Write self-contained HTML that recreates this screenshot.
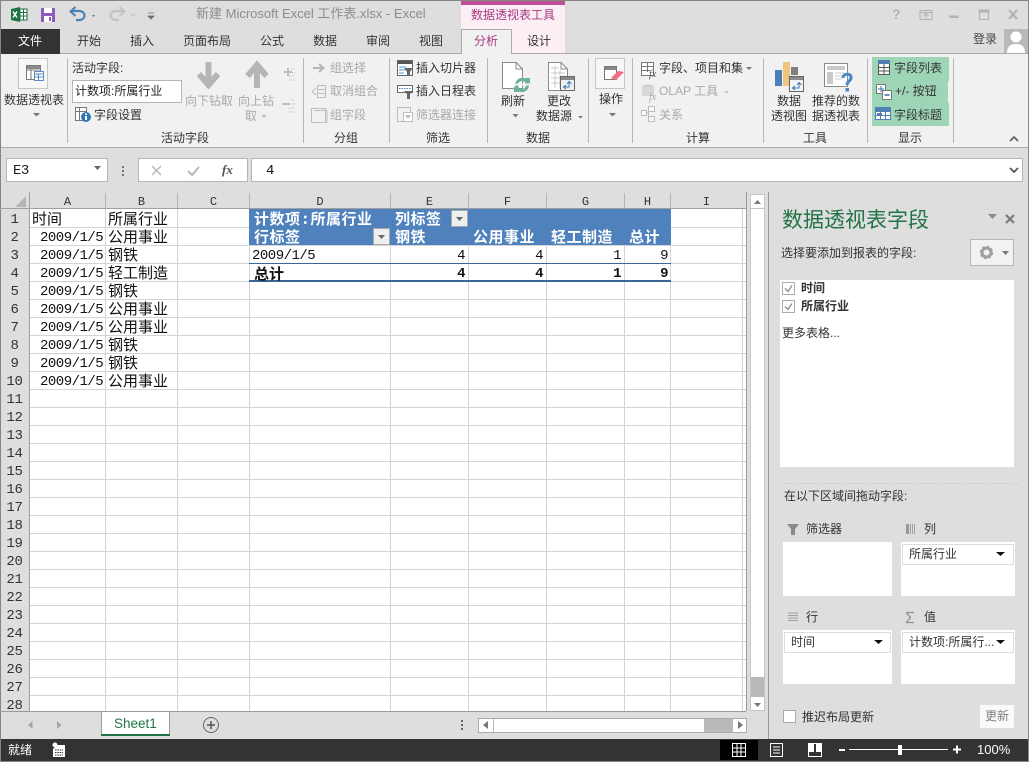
<!DOCTYPE html>
<html lang="zh"><head><meta charset="utf-8"><title>Excel</title>
<style>
html,body{margin:0;padding:0;width:1029px;height:762px;overflow:hidden;background:#dedede}
*{box-sizing:border-box}
#w{position:relative;width:1029px;height:762px;overflow:hidden;font-family:"Liberation Sans","Noto Sans CJK SC",sans-serif;font-size:12px;color:#333}
.t{position:absolute;white-space:nowrap;line-height:16px;height:16px}
.g{color:#a9a9a9}
.b{position:absolute}
.c{position:absolute;white-space:nowrap;line-height:18px;height:18px;margin-top:1px;font-family:"Liberation Mono","WenQuanYi Zen Hei","Noto Sans CJK SC",monospace;font-size:14px;letter-spacing:-.5px;color:#111}
.z{font-family:"WenQuanYi Zen Hei","Noto Sans CJK SC",sans-serif;font-size:15px;letter-spacing:0}
.w{color:#fff;font-weight:bold;letter-spacing:.5px}
.bb{font-weight:bold}
.r{text-align:right}
.n{position:absolute;left:0;width:29px;text-align:center;line-height:18px;height:18px;margin-top:1px;font-family:"Liberation Mono",monospace;font-size:14px;letter-spacing:-.3px;color:#333}
.h{position:absolute;top:194px;text-align:center;line-height:16px;font-family:"Liberation Mono",monospace;font-size:12px;color:#333}
svg{position:absolute;left:0;top:0}
</style></head><body><div id="w">

<svg width="1029" height="762" viewBox="0 0 1029 762">
<!-- window background and borders -->
<rect width="1029" height="762" fill="#dedede"/>
<rect y="54" width="1029" height="94" fill="#f1f1f1"/>
<rect y="53" width="1029" height="1" fill="#ababab"/>
<rect y="147" width="1029" height="1" fill="#ababab"/>
<rect width="1029" height="1" fill="#858585"/>
<rect width="1" height="762" fill="#858585"/>
<rect x="1028" width="1" height="762" fill="#858585"/>
<!-- contextual tabs -->
<rect x="461" y="1" width="104" height="52" fill="#fbeef5"/>
<rect x="461" y="1" width="104" height="4" fill="#bd5196"/>
<rect x="1" y="29" width="59" height="25" fill="#333"/>
<path d="M461.5 54V29.500H511.500V54" fill="#f1f1f1" stroke="#ababab"/>
<rect x="462" y="53" width="49" height="2" fill="#f1f1f1"/>
<!-- ribbon separators -->
<g fill="#b5b5b5"><rect x="67" y="58" width="1" height="85"/><rect x="303" y="58" width="1" height="85"/><rect x="389" y="58" width="1" height="85"/><rect x="487" y="58" width="1" height="85"/><rect x="588" y="58" width="1" height="85"/><rect x="632" y="58" width="1" height="85"/><rect x="763" y="58" width="1" height="85"/><rect x="867" y="58" width="1" height="85"/><rect x="953" y="58" width="1" height="85"/></g>
<!-- show group highlight -->
<path d="M872 57H949V81H948V103H949V126H872Z" fill="#9fd5b7"/>

<!-- Quick access: excel -->
<path d="M11 9 20 7V22L11 20Z" fill="#1e7145"/><rect x="20" y="9" width="7" height="11" fill="#fff" stroke="#1e7145"/><path d="M13 11.500 17 17.500M17 11.500 13 17.500" stroke="#fff" stroke-width="1.500"/><path d="M23.500 9V20M20 12.500H27M20 16H27" stroke="#1e7145"/>
<!-- save -->
<rect x="41" y="8" width="14" height="14" fill="#8e5db5"/><rect x="44" y="8" width="8" height="5" fill="#fff"/><rect x="44" y="16" width="8" height="6" fill="#fff"/><rect x="49" y="17" width="2" height="4" fill="#8e5db5"/>
<!-- undo / redo -->
<path d="M72 11H80C86 12 86 19 80 20H76" fill="none" stroke="#4a80b8" stroke-width="2.200"/><path d="M75.500 7 70.500 11.500 75.500 16" fill="none" stroke="#4a80b8" stroke-width="2"/>
<path d="M92 15 95 15 93.500 17Z" fill="#707070"/>
<path d="M123 11H115C109 12 109 19 115 20H119" fill="none" stroke="#c2c2c2" stroke-width="2.200"/><path d="M119.500 7 124.500 11.500 119.500 16" fill="none" stroke="#c2c2c2" stroke-width="2"/>
<path d="M130 14H136L133 17Z" fill="#c9c9c9"/>
<path d="M148 13H154M148 16H154L151 19Z" fill="#707070" stroke="#707070" stroke-width=".8"/>

<!-- window controls -->
<g fill="none" stroke="#b3b3b3">
<rect x="920" y="10.500" width="12" height="9"/><path d="M920 12.500H932M926 19V14M923.500 16 926 13.500 928.500 16"/>
<rect x="950" y="16" width="8" height="1.500" fill="#b3b3b3"/>
<rect x="979.500" y="10.500" width="9" height="9"/><rect x="979" y="10" width="10" height="2" fill="#b3b3b3"/>
<path d="M1009 10 1017 19M1017 10 1009 19" stroke-width="2.200"/></g>
<!-- avatar -->
<rect x="1004" y="29" width="24" height="24" fill="#b9b9b9"/>
<circle cx="1016" cy="37" r="5.500" fill="#fff"/><path d="M1007 53C1007 46 1011 44 1016 44S1025 46 1025 53Z" fill="#fff"/>
<path d="M1010 141 1014 137 1018 141" fill="none" stroke="#666" stroke-width="1.800"/>

<!-- pivot table button -->
<rect x="18.500" y="58.500" width="29" height="30" fill="#f7f7f7" stroke="#c6c6c6"/>
<g fill="none" stroke="#7b7b7b"><rect x="26.500" y="65.500" width="14" height="14" fill="#fff"/><path d="M26.500 70H40.500M31 65.500V79.500"/></g>
<rect x="27" y="66" width="13" height="3" fill="#8a8a8a"/>
<rect x="34.500" y="71.500" width="9" height="9" fill="#fff" stroke="#5b8cc0"/><path d="M34.500 74H43.500M34.500 77H43.500M38.500 74V80.500" stroke="#5b8cc0" fill="none"/>
<path d="M33 113H40L36.500 116.500Z" fill="#777"/>
<!-- field settings icon -->
<g fill="none" stroke="#777"><rect x="75.500" y="107.500" width="11" height="13" fill="#fff"/><path d="M75.500 111.500H86.500M79.500 107.500V120.500"/></g>
<circle cx="86" cy="117" r="5" fill="#2e75b5"/><rect x="85" y="116" width="2" height="4" fill="#fff"/><rect x="85" y="113.500" width="2" height="1.500" fill="#fff"/>
<!-- drill down / up -->
<path d="M208.500 62V82M199 74 208.500 85 218 74" fill="none" stroke="#b5b5b5" stroke-width="6"/>
<path d="M257 88V68M247.500 76 257 65 266.500 76" fill="none" stroke="#b5b5b5" stroke-width="6"/>
<path d="M261 115H267L264 118Z" fill="#bdbdbd"/>
<g stroke="#bdbdbd" fill="none"><path d="M284 72H292M288 68V76" stroke-width="2"/><path d="M291 69H295M292 72.500H295M289 76H295M289 80H295" stroke-dasharray="1 1"/>
<path d="M282 104H290" stroke-width="2"/><path d="M291 100H295M292 104H295M289 108H295M289 112H295" stroke-dasharray="1 1"/></g>
<!-- group icons -->
<path d="M313 68H323M319 64 323.500 68 319 72" fill="none" stroke="#b5b5b5" stroke-width="2"/>
<g fill="none" stroke="#bdbdbd"><rect x="317.500" y="85.500" width="8" height="12"/><path d="M317.500 89.500H325.500M317.500 93.500H325.500M316 88 312 91.500 316 95"/></g>
<rect x="311.500" y="108.500" width="14" height="14" fill="none" stroke="#bdbdbd"/><path d="M314 110.500H327V123" fill="none" stroke="#bdbdbd"/>
<!-- slicer icons -->
<rect x="397.500" y="60.500" width="15" height="15" fill="#fff" stroke="#666"/><rect x="398" y="61" width="14" height="3" fill="#555"/><path d="M399 67H406M399 70H405M399 73H404" stroke="#4f9bd9"/><path d="M404 68H413L410 72V76H407V72Z" fill="#666"/>
<rect x="397.500" y="85.500" width="15" height="7" fill="#fff" stroke="#666"/><path d="M399 88.500H411" stroke="#4f81bd" stroke-dasharray="1.500 1"/><path d="M404 91H413L410 94V99H407V94Z" fill="#666"/>
<rect x="397.500" y="107.500" width="13" height="14" fill="#f1f1f1" stroke="#bdbdbd"/><rect x="403.500" y="112.500" width="9" height="9" fill="#fff" stroke="#bdbdbd"/><path d="M405 115H411L408 119Z" fill="#bdbdbd"/>
<!-- refresh -->
<path d="M502.500 62.500H516L522.500 69V88.500H502.500Z" fill="#fff" stroke="#8a8a8a"/><path d="M516 62.500V69H522.500" fill="none" stroke="#8a8a8a"/>
<circle cx="522" cy="85" r="5.500" fill="none" stroke="#6bb39a" stroke-width="3"/><rect x="514" y="83.500" width="16" height="2" fill="#f1f1f1"/><path d="M524 78 530 78 530 84Z M520 92 514 92 514 86Z" fill="#6bb39a"/>
<!-- change source -->
<path d="M548.500 62.500H561L567.500 69V90.500H548.500Z" fill="#fff" stroke="#8a8a8a"/><path d="M561 62.500V69H567.500" fill="none" stroke="#8a8a8a"/><path d="M551 68H559M551 73H565M551 78H565M551 83H565M555 66V88M560 70V88" stroke="#c8c8c8" fill="none"/>
<rect x="560.500" y="76.500" width="14" height="14" fill="#eee" stroke="#666"/><rect x="561" y="77" width="13" height="3" fill="#888"/><path d="M564 87H569V82M567 84 569 81.500 571.500 84M566 85 563.500 87 566 89" fill="none" stroke="#3b78b8"/>
<path d="M578 116H583L580.500 118.500Z" fill="#777"/>
<path d="M512.500 114H518.500L515.500 117.500Z" fill="#777"/>
<!-- actions -->
<rect x="595.500" y="58.500" width="29" height="30" fill="#f7f7f7" stroke="#c6c6c6"/>
<rect x="604.500" y="66.500" width="12" height="13" fill="#fff" stroke="#777"/><rect x="605" y="67" width="11" height="3" fill="#888"/><path d="M611 78 618 71 624 72 616 80Z" fill="#ef6f86"/>
<path d="M609 113H616L612.500 116.500Z" fill="#777"/>
<!-- calc -->
<g fill="none" stroke="#777"><rect x="641.500" y="62.500" width="12" height="13" fill="#fff"/><path d="M641.500 66.500H653.500M641.500 70.500H650M647.500 62.500V72"/></g>
<text x="649" y="77" font-family="Liberation Serif" font-style="italic" font-size="10" fill="#555">fx</text>
<path d="M746 67H752L749 70Z" fill="#777"/>
<ellipse cx="648" cy="87" rx="6" ry="2.500" fill="#cfcfcf"/><rect x="642" y="87" width="12" height="9" fill="#d8d8d8"/>
<text x="649" y="100" font-family="Liberation Serif" font-style="italic" font-size="10" fill="#aaa">fx</text>
<path d="M724 91H729L726.500 93.500Z" fill="#c4c4c4"/>
<g fill="#f7f7f7" stroke="#bdbdbd"><rect x="641.500" y="110.500" width="5" height="5"/><rect x="648.500" y="106.500" width="6" height="5"/><rect x="648.500" y="116.500" width="6" height="5"/></g><path d="M646.500 113H648.500M648.500 109V119" stroke="#bdbdbd" fill="none"/>
<!-- pivot chart -->
<rect x="775" y="70" width="7" height="16" fill="#4a7fb8"/><rect x="783" y="62" width="7" height="24" fill="#eec57a"/><rect x="791" y="67" width="7" height="8" fill="#7f7f7f"/>
<rect x="789.500" y="76.500" width="14" height="15" fill="#f4f4f4" stroke="#666"/><rect x="790" y="77" width="13" height="3" fill="#8a8a8a"/><path d="M793 88H799V83M797 85 799 82.500 801.500 85M795 86 792.500 88 795 90" fill="none" stroke="#3b78b8"/>
<!-- recommended -->
<rect x="824.500" y="63.500" width="23" height="23" fill="#fff" stroke="#8a8a8a"/><rect x="827" y="66" width="18" height="4" fill="#c9c9c9"/><rect x="827" y="72" width="6" height="12" fill="#c9c9c9"/><path d="M835 73H845M835 76H845M835 79H842" stroke="#c9c9c9"/>
<path d="M843 78C843 73 852 73 851 78C851 81 847 81 847 85" fill="none" stroke="#4a86c5" stroke-width="3"/><rect x="845.500" y="88" width="3.500" height="3.500" fill="#4a86c5"/>
<!-- show icons -->
<rect x="878.500" y="60.500" width="11" height="14" fill="#fff" stroke="#555"/><rect x="878" y="60" width="12" height="4" fill="#4f7fb5"/><path d="M878.500 67.500H889.500M878.500 71H889.500M884 64V75" stroke="#555" fill="none"/>
<rect x="876.500" y="84.500" width="9" height="9" fill="#fff" stroke="#777"/><path d="M878 89H884M881 86V92" stroke="#2f6fae"/><rect x="882.500" y="90.500" width="9" height="9" fill="#fff" stroke="#777"/><path d="M884.500 95H889.500" stroke="#2f6fae" stroke-width="1.500"/>
<rect x="875.500" y="108.500" width="15" height="11" fill="#fff" stroke="#4f7fb5"/><rect x="875" y="107" width="16" height="5" fill="#4f7fb5"/><path d="M875.500 115.500H890.500M880.500 112V119M885.500 112V119" stroke="#4f7fb5"/><rect x="877" y="113" width="5" height="2" fill="#4f7fb5"/>

<!-- formula bar -->
<rect x="6.500" y="158.500" width="101" height="23" fill="#fff" stroke="#b5b5b5"/>
<path d="M94 166H101L97.500 170Z" fill="#666"/>
<rect x="122" y="166" width="2" height="2" fill="#777"/><rect x="122" y="170" width="2" height="2" fill="#777"/><rect x="122" y="174" width="2" height="2" fill="#777"/>
<rect x="138.500" y="158.500" width="109" height="23" fill="#fff" stroke="#b5b5b5"/>
<rect x="251.500" y="158.500" width="771" height="23" fill="#fff" stroke="#b5b5b5"/>
<path d="M152 166 161 175M161 166 152 175" stroke="#b8b8b8" stroke-width="1.500"/>
<path d="M188 171 192 175 199 167" fill="none" stroke="#b8b8b8" stroke-width="2"/>
<path d="M1010 168 1014 172 1018 168" fill="none" stroke="#555" stroke-width="1.800"/>

<!-- sheet -->
<rect x="29" y="209" width="717" height="502" fill="#fff"/>
<g fill="#d4d4d4">
<rect x="105" y="209" width="1" height="502"/><rect x="177" y="209" width="1" height="502"/><rect x="249" y="209" width="1" height="502"/><rect x="390" y="209" width="1" height="502"/><rect x="468" y="209" width="1" height="502"/><rect x="546" y="209" width="1" height="502"/><rect x="624" y="209" width="1" height="502"/><rect x="670" y="209" width="1" height="502"/><rect x="742" y="209" width="1" height="502"/>
<rect x="29" y="227" width="717" height="1"/><rect x="29" y="245" width="717" height="1"/><rect x="29" y="263" width="717" height="1"/><rect x="29" y="281" width="717" height="1"/><rect x="29" y="299" width="717" height="1"/><rect x="29" y="317" width="717" height="1"/><rect x="29" y="335" width="717" height="1"/><rect x="29" y="353" width="717" height="1"/><rect x="29" y="371" width="717" height="1"/><rect x="29" y="389" width="717" height="1"/><rect x="29" y="407" width="717" height="1"/><rect x="29" y="425" width="717" height="1"/><rect x="29" y="443" width="717" height="1"/><rect x="29" y="461" width="717" height="1"/><rect x="29" y="479" width="717" height="1"/><rect x="29" y="497" width="717" height="1"/><rect x="29" y="515" width="717" height="1"/><rect x="29" y="533" width="717" height="1"/><rect x="29" y="551" width="717" height="1"/><rect x="29" y="569" width="717" height="1"/><rect x="29" y="587" width="717" height="1"/><rect x="29" y="605" width="717" height="1"/><rect x="29" y="623" width="717" height="1"/><rect x="29" y="641" width="717" height="1"/><rect x="29" y="659" width="717" height="1"/><rect x="29" y="677" width="717" height="1"/><rect x="29" y="695" width="717" height="1"/>
</g>
<!-- header edges -->
<rect x="29" y="192" width="1" height="519" fill="#a0a0a0"/>
<rect y="208" width="747" height="1" fill="#a0a0a0"/>
<rect x="746" y="192" width="1" height="519" fill="#9a9a9a"/>
<g fill="#b4b4b4"><rect x="105" y="193" width="1" height="15"/><rect x="177" y="193" width="1" height="15"/><rect x="249" y="193" width="1" height="15"/><rect x="390" y="193" width="1" height="15"/><rect x="468" y="193" width="1" height="15"/><rect x="546" y="193" width="1" height="15"/><rect x="624" y="193" width="1" height="15"/><rect x="670" y="193" width="1" height="15"/></g>
<path d="M26 196V207H15Z" fill="#b5b5b5"/>
<!-- pivot -->
<rect x="249" y="209" width="422" height="36" fill="#4f81bd"/>
<rect x="249" y="263" width="422" height="1" fill="#3a6797"/>
<rect x="249" y="280" width="422" height="2" fill="#3a6797"/>
<rect x="451.500" y="210.500" width="16" height="16" fill="#efefef" stroke="#a9a9a9"/><path d="M456 217H463L459.500 221Z" fill="#666"/>
<rect x="373.500" y="228.500" width="16" height="16" fill="#efefef" stroke="#a9a9a9"/><path d="M378 235H385L381.500 239Z" fill="#666"/>

<!-- sheet tabs bar -->
<rect x="1" y="711" width="764" height="28" fill="#dedede"/>
<rect y="711" width="746" height="1" fill="#9a9a9a"/>
<path d="M101.500 735V711.500H169.500V735" fill="#fff" stroke="#9a9a9a"/>
<rect x="101" y="734" width="69" height="2" fill="#217346"/>
<path d="M32.500 721V729L28 725Z" fill="#a6a6a6"/><path d="M57 721V729L61.500 725Z" fill="#a6a6a6"/>
<circle cx="211" cy="725" r="7.500" fill="none" stroke="#666"/><path d="M207 725H215M211 721V729" stroke="#555" stroke-width="1.500"/>
<rect x="461" y="720" width="2" height="2" fill="#666"/><rect x="461" y="724" width="2" height="2" fill="#666"/><rect x="461" y="728" width="2" height="2" fill="#666"/>
<!-- horizontal scrollbar -->
<rect x="478.500" y="718.500" width="268" height="14" fill="#b9b9b9" stroke="#ababab"/>
<rect x="479" y="719" width="14" height="13" fill="#fff"/><rect x="494" y="719" width="210" height="13" fill="#fff"/><rect x="733" y="719" width="13" height="13" fill="#fff"/>
<path d="M488 721V729L483 725Z" fill="#777"/><path d="M738 721V729L743 725Z" fill="#777"/>
<!-- vertical scrollbar -->
<rect x="750.500" y="194.500" width="14" height="516" fill="#fff" stroke="#c5c5c5"/>
<rect x="751" y="208" width="13" height="1" fill="#c5c5c5"/>
<rect x="751" y="677" width="13" height="20" fill="#b9b9b9"/>
<path d="M754 204H761L757.500 200Z" fill="#777"/><path d="M754 703H761L757.500 707Z" fill="#777"/>

<!-- right pane -->
<rect x="768" y="192" width="1" height="547" fill="#9a9a9a"/>
<rect x="769" y="192" width="259" height="547" fill="#dedede"/>
<path d="M988 214H997L992.500 219Z" fill="#8a8a8a"/>
<path d="M1006 215 1014 223M1014 215 1006 223" stroke="#7a7a7a" stroke-width="2.200"/>
<rect x="970.500" y="239.500" width="43" height="26" fill="#f2f2f2" stroke="#b5b5b5"/>
<circle cx="986.500" cy="252.500" r="4.500" fill="none" stroke="#a0a0a0" stroke-width="3"/><circle cx="986.500" cy="252.500" r="6" fill="none" stroke="#a0a0a0" stroke-width="1.500" stroke-dasharray="2.500 2.200"/>
<path d="M1002 251H1009L1005.500 255Z" fill="#777"/>
<rect x="780" y="280" width="234" height="187" fill="#fff"/>
<rect x="782.500" y="282.500" width="12" height="12" fill="#fff" stroke="#ababab"/><path d="M785 288.500 788 291.500 792 285.500" fill="none" stroke="#8a8a8a" stroke-width="1.300"/>
<rect x="782.500" y="300.500" width="12" height="12" fill="#fff" stroke="#ababab"/><path d="M785 306.500 788 309.500 792 303.500" fill="none" stroke="#8a8a8a" stroke-width="1.300"/>
<path d="M782 483.500H1017" stroke="#bdbdbd" stroke-dasharray="1 2"/>
<path d="M787 524H799L795 529V535H791V529Z" fill="#8a8a8a"/>
<path d="M906.500 524V534M908.500 524V534M910.500 524V534M912.500 524V534M914.500 524V534" stroke="#a0a0a0"/><rect x="906" y="524" width="3" height="10" fill="#999"/>
<path d="M788 613H798M788 615.500H798M788 618H798M788 620.500H798" stroke="#a0a0a0"/>
<path d="M906 612.500H914M906 622.500H914M906.500 613 910.500 617.500 906.500 622" fill="none" stroke="#909090" stroke-width="1.300"/>
<rect x="783" y="542" width="109" height="54" fill="#fff"/>
<rect x="901" y="542" width="114" height="54" fill="#fff"/>
<rect x="783" y="630" width="109" height="54" fill="#fff"/>
<rect x="901" y="630" width="114" height="54" fill="#fff"/>
<rect x="902.500" y="544.500" width="111" height="20" fill="#fff" stroke="#dcdcdc"/>
<rect x="784.500" y="632.500" width="106" height="20" fill="#fff" stroke="#dcdcdc"/>
<rect x="902.500" y="632.500" width="111" height="20" fill="#fff" stroke="#dcdcdc"/>
<path d="M996 552H1005L1000.500 556Z" fill="#111"/><path d="M874 640H883L878.500 644Z" fill="#111"/><path d="M996 640H1005L1000.500 644Z" fill="#111"/>
<rect x="783.500" y="710.500" width="12" height="12" fill="#fff" stroke="#ababab"/>
<rect x="980" y="705" width="34" height="23" fill="#fafafa"/>

<!-- status bar -->
<rect x="1" y="739" width="1027" height="22" fill="#333"/>
<rect y="761" width="1029" height="1" fill="#858585"/>
<circle cx="55" cy="745" r="2.500" fill="#fff"/><path d="M58 745H65V757H53V749" fill="#fff"/><path d="M55 750H63M55 752.500H63M55 755H63" stroke="#333" stroke-dasharray="1.500 .8"/>
<rect x="720" y="740" width="38" height="20" fill="#000"/>
<path d="M732.500 743.500H745.500V756.500H732.500ZM732.500 748H745.500M732.500 752H745.500M737 743.500V756.500M741 743.500V756.500" fill="none" stroke="#fff"/>
<rect x="770.500" y="743.500" width="12" height="13" fill="none" stroke="#fff"/><path d="M773 747H780M773 750H780M773 753H780" stroke="#fff"/>
<path d="M808.500 743.500H821.500V756.500H808.500Z" fill="none" stroke="#fff"/><rect x="809" y="744" width="5" height="8" fill="#fff"/><rect x="816" y="744" width="5" height="8" fill="#fff"/>
<rect x="839" y="749" width="6" height="2" fill="#fff"/>
<rect x="849" y="749" width="99" height="1" fill="#fff"/><rect x="898" y="745" width="4" height="10" fill="#fff"/>
<path d="M953 749.500H961M957 745.500V753.500" stroke="#fff" stroke-width="2"/>
</svg>

<!-- title -->
<div class="t" style="left:196px;top:6px;font-size:13px;color:#8c8c8c">新建 Microsoft Excel 工作表.xlsx - Excel</div>
<div class="t" style="left:471px;top:7px;color:#a8387f">数据透视表工具</div>
<div class="t" style="left:892px;top:6px;font-size:14px;font-weight:bold;color:#b3b3b3">?</div>
<div class="t" style="left:973px;top:31px;color:#444">登录</div>

<!-- tabs -->
<div class="t" style="left:18px;top:33px;color:#fff">文件</div>
<div class="t" style="left:77px;top:33px">开始</div>
<div class="t" style="left:130px;top:33px">插入</div>
<div class="t" style="left:183px;top:33px">页面布局</div>
<div class="t" style="left:260px;top:33px">公式</div>
<div class="t" style="left:313px;top:33px">数据</div>
<div class="t" style="left:366px;top:33px">审阅</div>
<div class="t" style="left:419px;top:33px">视图</div>
<div class="t" style="left:474px;top:33px;color:#a8387f">分析</div>
<div class="t" style="left:527px;top:33px">设计</div>

<!-- ribbon text -->
<div class="t" style="left:4px;top:92px">数据透视表</div>
<div class="t" style="left:72px;top:60px">活动字段:</div>
<div class="b" style="left:72px;top:80px;width:110px;height:23px;background:#fff;border:1px solid #b5b5b5;line-height:21px;padding-left:2px;white-space:nowrap;color:#222">计数项:所属行业</div>
<div class="t" style="left:94px;top:107px">字段设置</div>
<div class="t g" style="left:185px;top:93px">向下钻取</div>
<div class="t g" style="left:238px;top:93px">向上钻</div>
<div class="t g" style="left:245px;top:108px">取</div>
<div class="t g" style="left:330px;top:60px">组选择</div>
<div class="t g" style="left:330px;top:83px">取消组合</div>
<div class="t g" style="left:330px;top:107px">组字段</div>
<div class="t" style="left:416px;top:60px">插入切片器</div>
<div class="t" style="left:416px;top:83px">插入日程表</div>
<div class="t g" style="left:416px;top:107px">筛选器连接</div>
<div class="t" style="left:501px;top:93px">刷新</div>
<div class="t" style="left:547px;top:93px">更改</div>
<div class="t" style="left:536px;top:108px">数据源</div>
<div class="t" style="left:599px;top:91px">操作</div>
<div class="t" style="left:659px;top:60px">字段、项目和集</div>
<div class="t g" style="left:659px;top:83px">OLAP 工具</div>
<div class="t g" style="left:659px;top:107px">关系</div>
<div class="t" style="left:777px;top:93px">数据</div>
<div class="t" style="left:771px;top:108px">透视图</div>
<div class="t" style="left:812px;top:93px">推荐的数</div>
<div class="t" style="left:812px;top:108px">据透视表</div>
<div class="t" style="left:894px;top:60px">字段列表</div>
<div class="t" style="left:895px;top:83px">+/- 按钮</div>
<div class="t" style="left:894px;top:107px">字段标题</div>
<div class="t" style="left:161px;top:130px">活动字段</div>
<div class="t" style="left:334px;top:130px">分组</div>
<div class="t" style="left:426px;top:130px">筛选</div>
<div class="t" style="left:526px;top:130px">数据</div>
<div class="t" style="left:686px;top:130px">计算</div>
<div class="t" style="left:803px;top:130px">工具</div>
<div class="t" style="left:898px;top:130px">显示</div>

<!-- formula bar text -->
<div class="c" style="left:13px;top:161px;color:#222">E3</div>
<div class="t" style="left:222px;top:162px;font-family:'Liberation Serif',serif;font-style:italic;font-weight:bold;font-size:13px;color:#555">fx</div>
<div class="c" style="left:266px;top:161px">4</div>

<!-- column headers -->
<div class="h" style="left:30px;width:75px">A</div>
<div class="h" style="left:106px;width:71px">B</div>
<div class="h" style="left:178px;width:71px">C</div>
<div class="h" style="left:250px;width:140px">D</div>
<div class="h" style="left:391px;width:77px">E</div>
<div class="h" style="left:469px;width:77px">F</div>
<div class="h" style="left:547px;width:77px">G</div>
<div class="h" style="left:625px;width:45px">H</div>
<div class="h" style="left:671px;width:71px">I</div>

<!-- row numbers -->
<div class="n" style="top:210px">1</div><div class="n" style="top:228px">2</div><div class="n" style="top:246px">3</div><div class="n" style="top:264px">4</div><div class="n" style="top:282px">5</div><div class="n" style="top:300px">6</div><div class="n" style="top:318px">7</div><div class="n" style="top:336px">8</div><div class="n" style="top:354px">9</div><div class="n" style="top:372px">10</div><div class="n" style="top:390px">11</div><div class="n" style="top:408px">12</div><div class="n" style="top:426px">13</div><div class="n" style="top:444px">14</div><div class="n" style="top:462px">15</div><div class="n" style="top:480px">16</div><div class="n" style="top:498px">17</div><div class="n" style="top:516px">18</div><div class="n" style="top:534px">19</div><div class="n" style="top:552px">20</div><div class="n" style="top:570px">21</div><div class="n" style="top:588px">22</div><div class="n" style="top:606px">23</div><div class="n" style="top:624px">24</div><div class="n" style="top:642px">25</div><div class="n" style="top:660px">26</div><div class="n" style="top:678px">27</div><div class="n" style="top:696px;height:14px;overflow:hidden">28</div>

<!-- cells -->
<div class="c z" style="left:32px;top:209px">时间</div>
<div class="c z" style="left:108px;top:209px">所属行业</div>
<div class="c" style="left:40px;top:228px">2009/1/5</div><div class="c z" style="left:108px;top:227px">公用事业</div>
<div class="c" style="left:40px;top:246px">2009/1/5</div><div class="c z" style="left:108px;top:245px">钢铁</div>
<div class="c" style="left:40px;top:264px">2009/1/5</div><div class="c z" style="left:108px;top:263px">轻工制造</div>
<div class="c" style="left:40px;top:282px">2009/1/5</div><div class="c z" style="left:108px;top:281px">钢铁</div>
<div class="c" style="left:40px;top:300px">2009/1/5</div><div class="c z" style="left:108px;top:299px">公用事业</div>
<div class="c" style="left:40px;top:318px">2009/1/5</div><div class="c z" style="left:108px;top:317px">公用事业</div>
<div class="c" style="left:40px;top:336px">2009/1/5</div><div class="c z" style="left:108px;top:335px">钢铁</div>
<div class="c" style="left:40px;top:354px">2009/1/5</div><div class="c z" style="left:108px;top:353px">钢铁</div>
<div class="c" style="left:40px;top:372px">2009/1/5</div><div class="c z" style="left:108px;top:371px">公用事业</div>

<!-- pivot text -->
<div class="c z w" style="left:254px;top:209px">计数项<span style="display:inline-block;width:10px;text-align:center">:</span>所属行业</div>
<div class="c z w" style="left:395px;top:209px">列标签</div>
<div class="c z w" style="left:254px;top:227px">行标签</div>
<div class="c z w" style="left:395px;top:227px">钢铁</div>
<div class="c z w" style="left:473px;top:227px">公用事业</div>
<div class="c z w" style="left:551px;top:227px">轻工制造</div>
<div class="c z w" style="left:629px;top:227px">总计</div>
<div class="c" style="left:252px;top:246px">2009/1/5</div>
<div class="c r" style="left:405px;width:60px;top:246px">4</div>
<div class="c r" style="left:483px;width:60px;top:246px">4</div>
<div class="c r" style="left:561px;width:60px;top:246px">1</div>
<div class="c r" style="left:608px;width:60px;top:246px">9</div>
<div class="c z bb" style="left:254px;top:264px">总计</div>
<div class="c r bb" style="left:405px;width:60px;top:264px">4</div>
<div class="c r bb" style="left:483px;width:60px;top:264px">4</div>
<div class="c r bb" style="left:561px;width:60px;top:264px">1</div>
<div class="c r bb" style="left:608px;width:60px;top:264px">9</div>

<!-- sheet tab -->
<div class="t" style="left:114px;top:716px;font-size:13.500px;color:#217346">Sheet1</div>

<!-- pane -->
<div class="t" style="left:782px;top:208px;height:26px;line-height:26px;font-size:21px;color:#217346">数据透视表字段</div>
<div class="t" style="left:781px;top:245px">选择要添加到报表的字段:</div>
<div class="t bb" style="left:801px;top:280px">时间</div>
<div class="t bb" style="left:801px;top:298px">所属行业</div>
<div class="t" style="left:782px;top:325px">更多表格...</div>
<div class="t" style="left:784px;top:488px">在以下区域间拖动字段:</div>
<div class="t" style="left:806px;top:521px">筛选器</div>
<div class="t" style="left:924px;top:521px">列</div>
<div class="t" style="left:806px;top:609px">行</div>
<div class="t" style="left:924px;top:609px">值</div>
<div class="t" style="left:909px;top:546px">所属行业</div>
<div class="t" style="left:791px;top:634px">时间</div>
<div class="t" style="left:909px;top:634px">计数项:所属行...</div>
<div class="t" style="left:802px;top:709px">推迟布局更新</div>
<div class="t" style="left:985px;top:708px;color:#7f7f7f">更新</div>

<!-- status -->
<div class="t" style="left:8px;top:742px;color:#fff">就绪</div>
<div class="t" style="left:977px;top:742px;font-size:13px;color:#fff">100%</div>
</div></body></html>
